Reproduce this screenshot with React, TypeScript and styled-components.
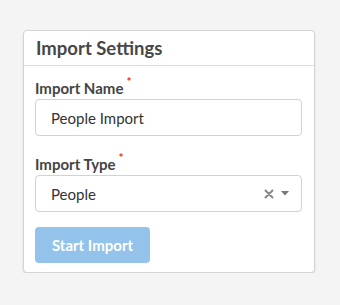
import React from "react";
import styled, { createGlobalStyle } from "styled-components";

const GlobalStyle = createGlobalStyle`
  html, body {
    margin: 0;
    padding: 0;
    background: #f4f4f4;
    font-family: Lato, "Open Sans", sans-serif;
  }
`;

const Page = styled.div`
  padding: 30px 0 0 23px;
`;

const Card = styled.div`
  width: 290px;
  background: #fff;
  border: 1px solid #d4d4d4;
  border-radius: 4px;
  box-shadow: 0 1px 2px rgba(0, 0, 0, 0.12);
`;

const CardHeader = styled.div`
  height: 34px;
  padding: 0 12px;
  display: flex;
  align-items: center;
  border-bottom: 1px solid #dcdcdc;
  font-size: 18.5px;
  font-weight: 700;
  color: #474747;
`;

const CardBody = styled.div`
  padding: 12px 11px 9px;
  display: flex;
  flex-direction: column;
`;

const Field = styled.div<{ $space: number }>`
  display: flex;
  flex-direction: column;
  margin-bottom: ${(p) => p.$space}px;
`;

const Label = styled.label`
  font-size: 15px;
  font-weight: 700;
  color: #444;
  line-height: 20px;
  margin-bottom: 1px;
`;

const Required = styled.span`
  color: #e8262b;
  font-size: 12px;
  vertical-align: top;
  margin-left: 3px;
  position: relative;
  top: -6px;
`;

const Input = styled.input`
  box-sizing: border-box;
  width: 267px;
  height: 37px;
  padding: 0 15px;
  border: 1px solid #d2d2d2;
  border-radius: 4px;
  font-family: inherit;
  font-size: 15px;
  color: #333;
  outline: none;
`;

const Select = styled.div`
  box-sizing: border-box;
  width: 267px;
  height: 37px;
  padding: 0 12px 0 15px;
  border: 1px solid #d2d2d2;
  border-radius: 4px;
  display: flex;
  align-items: center;
  font-size: 15px;
  color: #333;
`;

const SelectValue = styled.span`
  flex: 1;
`;

const IconSlot = styled.span<{ $gap?: number }>`
  display: flex;
  align-items: center;
  margin-left: ${(p) => p.$gap ?? 0}px;
`;

const Button = styled.button`
  width: 115px;
  height: 36px;
  border: none;
  border-radius: 4px;
  background: #93c2ea;
  color: #fff;
  font-family: inherit;
  font-size: 15px;
  font-weight: 700;
  cursor: not-allowed;
  align-self: flex-start;
`;

export default function App() {
  return (
    <>
      <GlobalStyle />
      <Page>
        <Card>
          <CardHeader>Import Settings</CardHeader>
          <CardBody>
            <Field $space={18}>
              <Label>
                Import Name<Required>*</Required>
              </Label>
              <Input defaultValue="People Import" />
            </Field>
            <Field $space={15}>
              <Label>
                Import Type<Required>*</Required>
              </Label>
              <Select>
                <SelectValue>People</SelectValue>
                <IconSlot>
                  <svg width="10" height="10" viewBox="0 0 10 10">
                    <path d="M1.5 1.5 L8.5 8.5 M8.5 1.5 L1.5 8.5" stroke="#888" strokeWidth="2" strokeLinecap="round" />
                  </svg>
                </IconSlot>
                <IconSlot $gap={7}>
                  <svg width="8" height="5" viewBox="0 0 8 5">
                    <path d="M0 0 H8 L4 4.5 Z" fill="#777" />
                  </svg>
                </IconSlot>
              </Select>
            </Field>
            <Button disabled>Start Import</Button>
          </CardBody>
        </Card>
      </Page>
    </>
  );
}
